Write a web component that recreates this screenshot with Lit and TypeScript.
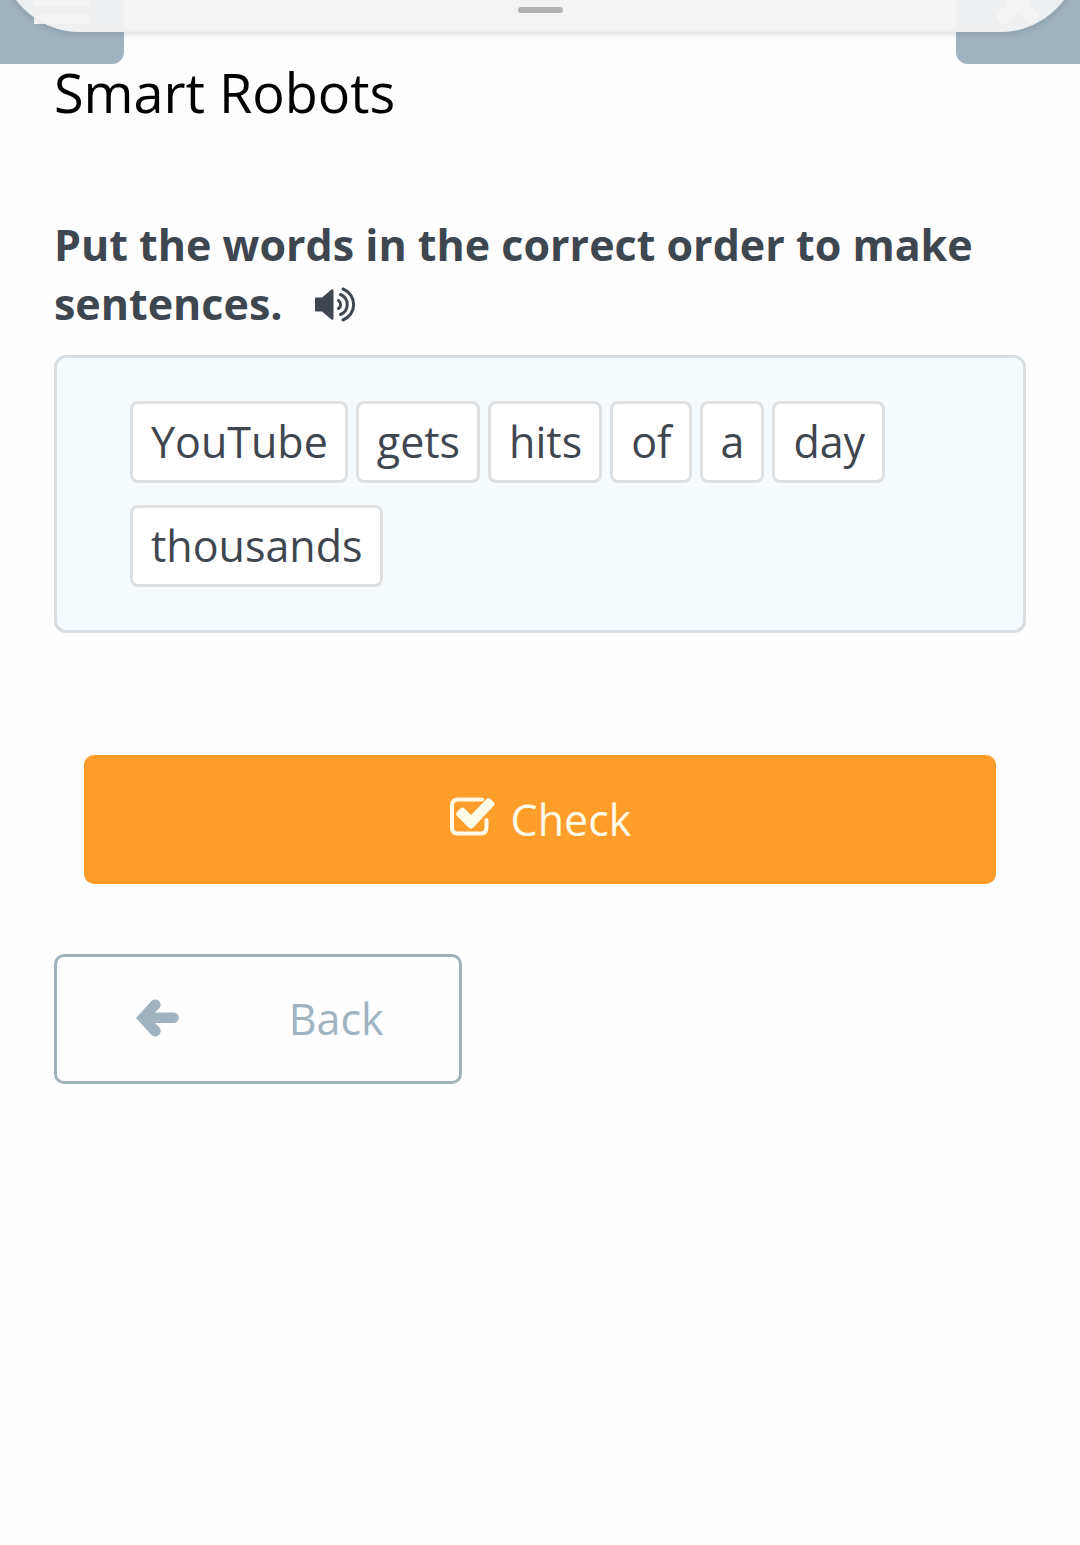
import { LitElement, html, css } from "lit";
import { customElement, property } from "lit/decorators.js";

@customElement("word-tile")
export class WordTile extends LitElement {
  @property() word = "";

  static styles = css`
    :host {
      display: block;
    }
    .tile {
      display: block;
      box-sizing: border-box;
      margin: 0;
      padding: 8px 17px 8px 18px;
      border: 3px solid #dedfe1;
      border-radius: 8px;
      background: #fff;
      color: #40464f;
      font: 400 43px/60px "Open Sans", sans-serif;
      cursor: grab;
    }
  `;

  render() {
    return html`<button class="tile" type="button">${this.word}</button>`;
  }
}

@customElement("app-root")
export class AppRoot extends LitElement {
  @property({ attribute: false })
  words = ["YouTube", "gets", "hits", "of", "a", "day", "thousands"];

  static styles = css`
    :host {
      display: block;
      min-height: 100vh;
      background: #fefefe;
      color: #3e4650;
      font-family: "Open Sans", sans-serif;
    }
    .bar {
      position: relative;
      display: flex;
      justify-content: space-between;
    }
    .corner {
      display: block;
      height: 64px;
      margin: 0;
      padding: 0 34px;
      border: 0;
      background: #9fb3c1;
    }
    .corner.menu {
      border-radius: 0 0 12px 0;
    }
    .corner.close {
      border-radius: 0 0 0 12px;
    }
    .corner svg {
      display: block;
      width: 56px;
      height: 64px;
    }
    .sheet {
      position: absolute;
      left: 0;
      right: 0;
      bottom: 32px;
      height: 160px;
      border-radius: 80px;
      background: rgba(243, 243, 244, 0.93);
      box-shadow: 0 1px 8px rgba(0, 0, 0, 0.16);
      box-sizing: border-box;
      border-bottom: 2px solid rgba(240, 240, 240, 0.9);
    }
    .grip {
      position: absolute;
      left: 50%;
      bottom: 17px;
      width: 45px;
      height: 6px;
      margin-left: -22px;
      border-radius: 3px;
      background: #b1b1b1;
    }
    .page {
      display: flex;
      flex-direction: column;
      padding: 0 54px 54px;
    }
    .title {
      margin: 0;
      color: #000;
      font-size: 54px;
      font-weight: 400;
      line-height: 56px;
    }
    .prompt {
      margin: 95px 0 22px;
      font-size: 43px;
      font-weight: 700;
      line-height: 59px;
    }
    .listen {
      display: inline-block;
      margin: 0 0 0 20px;
      padding: 0;
      border: 0;
      background: none;
      color: inherit;
      vertical-align: -2px;
    }
    .listen svg {
      display: block;
      width: 42px;
      height: 36px;
    }
    .board {
      display: flex;
      flex-wrap: wrap;
      gap: 22px 8px;
      padding: 43px 73px;
      border: 3px solid #d7dde1;
      border-radius: 12px;
      background: #f5faff;
    }
    .check {
      display: flex;
      align-items: center;
      justify-content: center;
      gap: 16px;
      margin: 122px 30px 70px;
      padding: 34px;
      border: 0;
      border-radius: 10px;
      background: #ff9d2b;
      color: #fffbe6;
      font: 400 43px/61px "Open Sans", sans-serif;
    }
    .check svg {
      width: 46px;
      height: 48px;
    }
    .back {
      display: grid;
      grid-template-columns: 1fr 1fr;
      align-items: center;
      justify-items: center;
      width: 42%;
      margin: 0;
      padding: 32px 34px 32px 12px;
      border: 3px solid #a0b1b9;
      border-radius: 10px;
      background: #fefefe;
      color: #9fb3c1;
      font: 400 43px/60px "Open Sans", sans-serif;
    }
    .back svg {
      width: 44px;
      height: 40px;
    }
  `;

  render() {
    return html`
      <header class="bar">
        <button class="corner menu" type="button" aria-label="Menu">
          <svg viewBox="0 0 56 64" fill="#fff" aria-hidden="true">
            <rect y="-3" width="56" height="9" rx="1" />
            <rect y="15" width="56" height="9" rx="1" />
          </svg>
        </button>
        <button class="corner close" type="button" aria-label="Close">
          <svg viewBox="0 0 56 64" fill="none" stroke="#fff" stroke-width="14" stroke-linecap="round" aria-hidden="true">
            <path d="M14 17 42 -11M42 17 14 -11" />
          </svg>
        </button>
        <div class="sheet"><div class="grip"></div></div>
      </header>
      <main class="page">
        <h1 class="title">Smart Robots</h1>
        <h2 class="prompt">
          Put the words in the correct order to make sentences.
          <button class="listen" type="button" aria-label="Listen">
            <svg viewBox="0 0 42 36" aria-hidden="true">
              <path fill="currentColor" d="M1 12.500Q1 11.500 2 11.500H8L17.500 3.500Q19.500 2.500 19.500 5V32Q19.500 34.500 17.500 33.500L8 25.500H2Q1 25.500 1 24.500Z" />
              <path fill="none" stroke="currentColor" stroke-width="3" stroke-linecap="round" d="M24.500 14.500A4.800 4.800 0 0 1 24.500 22.500M26.500 8.500A10.800 10.800 0 0 1 26.500 28.500M29 3A16.600 16.600 0 0 1 29 34" />
            </svg>
          </button>
        </h2>
        <section class="board" aria-label="Words">
          ${this.words.map((w) => html`<word-tile .word=${w}></word-tile>`)}
        </section>
        <button class="check" type="button">
          <svg viewBox="0 0 46 48" aria-hidden="true">
            <path fill="none" stroke="currentColor" stroke-width="4" stroke-linecap="round" d="M33 3.500H9Q3 3.500 3 9.500V31.500Q3 37.500 9 37.500H31.500Q37.500 37.500 37.500 31.500V24" />
            <path fill="currentColor" d="M8 16 11.500 12.500Q13.500 10.500 15.500 12.500L22 19 37.500 3Q39.500 1 41.500 3L45 6.500Q46.500 8 45 9.500L24.500 31.500Q22 34 19.500 31.500L8 20Q6 18 8 16Z" />
          </svg>
          <span>Check</span>
        </button>
        <button class="back" type="button">
          <svg viewBox="0 0 44 40" aria-hidden="true">
            <path fill="currentColor" d="M0 19 15 2.500A5 5 0 0 1 23.500 9L19 13.500H37.500A5.300 5.300 0 0 1 37.500 24.100H19L23.500 28.600A5 5 0 0 1 15 35.500Z" />
          </svg>
          <span>Back</span>
        </button>
      </main>
    `;
  }
}
